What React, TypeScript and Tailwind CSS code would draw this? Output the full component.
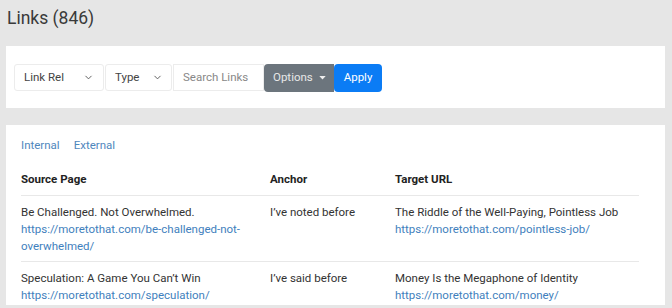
import React from "react";
import { ChevronDown } from "lucide-react";

const rows = [
  {
    title: "Be Challenged. Not Overwhelmed.",
    url: "https://moretothat.com/be-challenged-not-overwhelmed/",
    anchor: "I’ve noted before",
    tTitle: "The Riddle of the Well-Paying, Pointless Job",
    tUrl: "https://moretothat.com/pointless-job/",
  },
  {
    title: "Speculation: A Game You Can’t Win",
    url: "https://moretothat.com/speculation/",
    anchor: "I’ve said before",
    tTitle: "Money Is the Megaphone of Identity",
    tUrl: "https://moretothat.com/money/",
  },
];

export default function App() {
  return (
    <div
      className="w-[672px] h-[308px] overflow-hidden bg-[#e6e6e6] text-[#333]"
      style={{ fontFamily: "Roboto, 'Liberation Sans', sans-serif" }}
    >
      <div className="h-[46px] pl-[7px] pt-[6px] text-[17.5px] leading-[24px] text-[#3a3a3a]">
        Links (846)
      </div>
      <div className="mx-[6px] w-[659px] h-[62px] bg-white flex items-center pl-[8px] pt-[1px]">
        <div className="flex items-center h-[27px]">
          <div className="w-[90px] h-full border border-[#ececec] rounded-[3px] flex items-center justify-between pl-[9px] pr-[9px] text-[11.5px] text-[#444]">
            <span>Link Rel</span>
            <ChevronDown size={11} strokeWidth={2} color="#555" />
          </div>
          <div className="ml-[1px] w-[67px] h-full border border-[#ececec] rounded-[3px] flex items-center justify-between pl-[9px] pr-[8px] text-[11.5px] text-[#444]">
            <span>Type</span>
            <ChevronDown size={11} strokeWidth={2} color="#555" />
          </div>
          <div className="ml-[1px] w-[91px] h-full border border-[#ececec] flex items-center pl-[9px] text-[11.5px] text-[#888]">
            Search Links
          </div>
          <div className="w-[70px] h-[28px] bg-[#6c757d] rounded-l-[4px] flex items-center pl-[9px] text-[11.5px] text-[#e8e8e8]">
            <span>Options</span>
            <svg width="7" height="4" viewBox="0 0 8 5" className="ml-[6px]">
              <path d="M0 0 L8 0 L4 4.5 Z" fill="#eee" />
            </svg>
          </div>
          <div className="w-[48px] h-[28px] bg-[#0b7cf5] rounded-[4px] flex items-center justify-center text-[11.5px] text-white">
            Apply
          </div>
        </div>
      </div>
      <div className="mt-[17px] mx-[6px] w-[659px] h-[180px] bg-white pl-[15px] pt-[12px] text-[11.5px]">
        <div className="flex gap-[14px] leading-[17px] text-[#4f87bd]">
          <span>Internal</span>
          <span>External</span>
        </div>
        <table className="mt-[10px] table-fixed border-collapse w-[618px] leading-[17px]">
          <colgroup>
            <col className="w-[249px]" />
            <col className="w-[125px]" />
            <col className="w-[244px]" />
          </colgroup>
          <thead>
            <tr className="border-b border-[#e8e8e8]">
              <th className="text-left font-bold py-[7px] text-[#222]">Source Page</th>
              <th className="text-left font-bold py-[7px] text-[#222]">Anchor</th>
              <th className="text-left font-bold py-[7px] text-[#222]">Target URL</th>
            </tr>
          </thead>
          <tbody>
            {rows.map((r, i) => (
              <tr key={i} className={i === 0 ? "border-b border-[#e8e8e8] align-top" : "align-top"}>
                <td className="pt-[8px] pb-[6px] pr-[8px] text-[#333]">
                  <div>{r.title}</div>
                  <div className="text-[#3f7fbd]">{r.url}</div>
                </td>
                <td className="pt-[8px] pb-[6px] text-[#333]">{r.anchor}</td>
                <td className="pt-[8px] pb-[6px] text-[#333]">
                  <div>{r.tTitle}</div>
                  <div className="text-[#3f7fbd]">{r.tUrl}</div>
                </td>
              </tr>
            ))}
          </tbody>
        </table>
      </div>
    </div>
  );
}
